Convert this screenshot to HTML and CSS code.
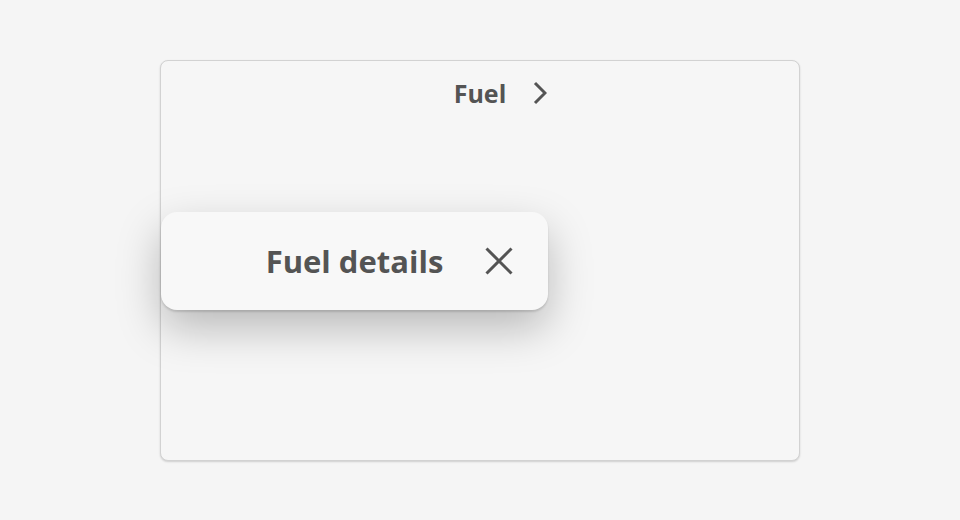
FILE: index.html
```html
<!DOCTYPE html>
<html lang="en">
<head>
<meta charset="utf-8">
<title>Fuel</title>
<link rel="stylesheet" href="styles.css">
</head>
<body>
<div class="page">
  <section class="card">
    <header class="card-head">
      <span class="head-title">Fuel</span>
      <svg class="chevron" width="14" height="24" viewBox="0 0 14 24" aria-hidden="true">
        <polyline points="2,2 12,12 2,22" fill="none" stroke="#545454" stroke-width="3" stroke-linecap="butt" stroke-linejoin="miter"/>
      </svg>
    </header>
    <div class="popover">
      <span class="pop-title">Fuel details</span>
      <svg class="close" width="28" height="28" viewBox="0 0 28 28" aria-hidden="true">
        <path d="M1.5 1.5 L26.5 26.5 M26.5 1.5 L1.5 26.5" fill="none" stroke="#545454" stroke-width="3"/>
      </svg>
    </div>
  </section>
</div>
</body>
</html>
```

FILE: styles.css
```css
html, body {
  margin: 0;
  padding: 0;
  background: #f5f5f5;
  font-family: "Open Sans", "Noto Sans", "Liberation Sans", sans-serif;
  color: #545454;
}

.page {
  width: 960px;
  height: 520px;
  padding: 60px 0 0 160px;
  box-sizing: border-box;
}

.card {
  position: relative;
  width: 640px;
  height: 401px;
  box-sizing: border-box;
  background: #f6f6f6;
  border: 1px solid #d2d2d2;
  border-radius: 8px;
  box-shadow: 0 1px 2px rgba(0, 0, 0, 0.16);
}

.card-head {
  display: grid;
  grid-template-columns: 1fr auto 1fr;
  align-items: center;
  padding-top: 15px;
}

.head-title {
  grid-column: 2;
  font-size: 25px;
  line-height: 34px;
  font-weight: 700;
}

.chevron {
  grid-column: 3;
  justify-self: start;
  margin-left: 27px;
}

.popover {
  position: absolute;
  left: 0;
  top: 151px;
  width: 387px;
  height: 98px;
  box-sizing: border-box;
  display: grid;
  grid-template-columns: 1fr auto 1fr;
  align-items: center;
  background: #f8f8f8;
  border-radius: 16px;
  box-shadow: 0 2px 2px rgba(0, 0, 0, 0.13), 0 18px 44px rgba(0, 0, 0, 0.25);
}

.pop-title {
  grid-column: 2;
  font-size: 31px;
  line-height: 42px;
  font-weight: 700;
}

.close {
  grid-column: 3;
  justify-self: start;
  margin-left: 42px;
}
```
